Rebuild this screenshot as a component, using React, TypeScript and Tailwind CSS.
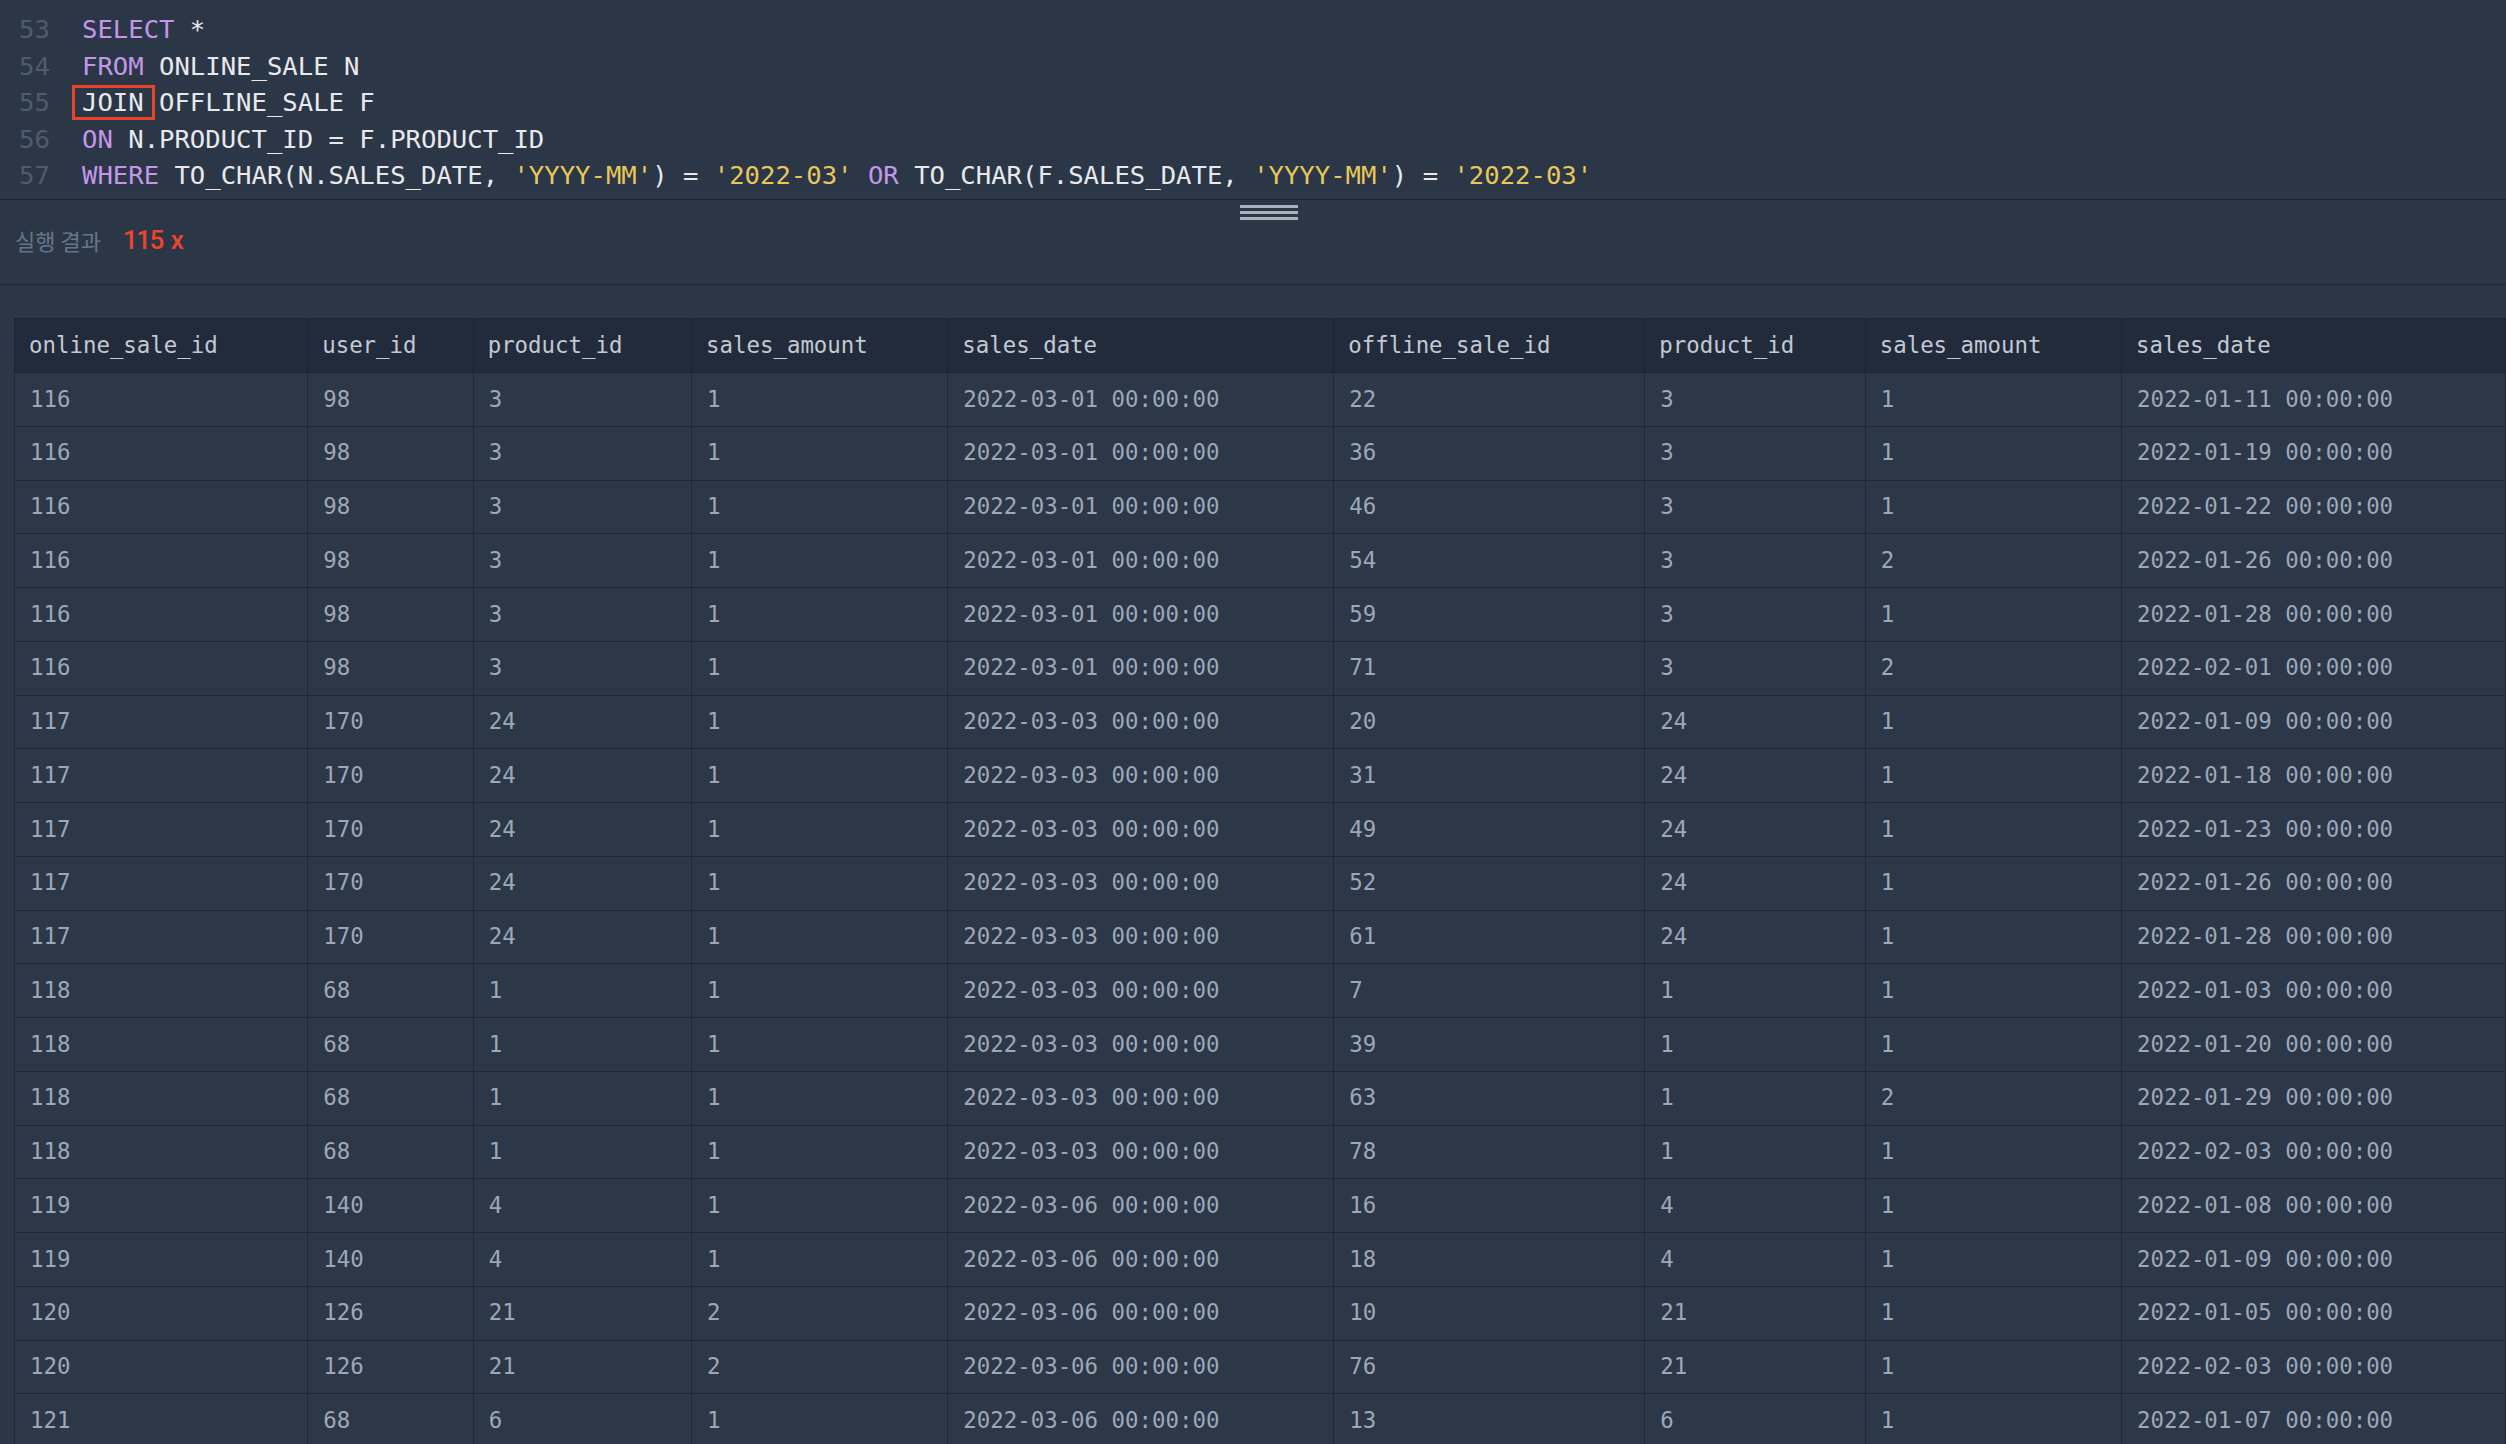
import React from "react";

const MONO = "font-['DejaVu_Sans_Mono','Liberation_Mono',monospace]";

type Tok = { t: string; c?: "kw" | "str" | "box" };

const CODE: { n: number; toks: Tok[] }[] = [
  { n: 53, toks: [{ t: "SELECT", c: "kw" }, { t: " *" }] },
  { n: 54, toks: [{ t: "FROM", c: "kw" }, { t: " ONLINE_SALE N" }] },
  { n: 55, toks: [{ t: "JOIN", c: "box" }, { t: " OFFLINE_SALE F" }] },
  { n: 56, toks: [{ t: "ON", c: "kw" }, { t: " N.PRODUCT_ID = F.PRODUCT_ID" }] },
  {
    n: 57,
    toks: [
      { t: "WHERE", c: "kw" },
      { t: " TO_CHAR(N.SALES_DATE, " },
      { t: "'YYYY-MM'", c: "str" },
      { t: ") = " },
      { t: "'2022-03'", c: "str" },
      { t: " " },
      { t: "OR", c: "kw" },
      { t: " TO_CHAR(F.SALES_DATE, " },
      { t: "'YYYY-MM'", c: "str" },
      { t: ") = " },
      { t: "'2022-03'", c: "str" },
    ],
  },
];

const COLUMNS = [
  { name: "online_sale_id", w: "w-[294px]" },
  { name: "user_id", w: "w-[166px]" },
  { name: "product_id", w: "w-[219px]" },
  { name: "sales_amount", w: "w-[257px]" },
  { name: "sales_date", w: "w-[387px]" },
  { name: "offline_sale_id", w: "w-[312px]" },
  { name: "product_id", w: "w-[221px]" },
  { name: "sales_amount", w: "w-[257px]" },
  { name: "sales_date", w: "w-[385px]" },
];

// online id, user, product, amount, online date, offline id, amount, offline date
const RAW: [number, number, number, number, string, number, number, string][] = [
  [116, 98, 3, 1, "03-01", 22, 1, "01-11"],
  [116, 98, 3, 1, "03-01", 36, 1, "01-19"],
  [116, 98, 3, 1, "03-01", 46, 1, "01-22"],
  [116, 98, 3, 1, "03-01", 54, 2, "01-26"],
  [116, 98, 3, 1, "03-01", 59, 1, "01-28"],
  [116, 98, 3, 1, "03-01", 71, 2, "02-01"],
  [117, 170, 24, 1, "03-03", 20, 1, "01-09"],
  [117, 170, 24, 1, "03-03", 31, 1, "01-18"],
  [117, 170, 24, 1, "03-03", 49, 1, "01-23"],
  [117, 170, 24, 1, "03-03", 52, 1, "01-26"],
  [117, 170, 24, 1, "03-03", 61, 1, "01-28"],
  [118, 68, 1, 1, "03-03", 7, 1, "01-03"],
  [118, 68, 1, 1, "03-03", 39, 1, "01-20"],
  [118, 68, 1, 1, "03-03", 63, 2, "01-29"],
  [118, 68, 1, 1, "03-03", 78, 1, "02-03"],
  [119, 140, 4, 1, "03-06", 16, 1, "01-08"],
  [119, 140, 4, 1, "03-06", 18, 1, "01-09"],
  [120, 126, 21, 2, "03-06", 10, 1, "01-05"],
  [120, 126, 21, 2, "03-06", 76, 1, "02-03"],
  [121, 68, 6, 1, "03-06", 13, 1, "01-07"],
];

const ROWS = RAW.map(([id, user, product, amount, date, offId, offAmount, offDate]) => [
  String(id),
  String(user),
  String(product),
  String(amount),
  `2022-${date} 00:00:00`,
  String(offId),
  String(product),
  String(offAmount),
  `2022-${offDate} 00:00:00`,
]);

function CodeToken({ tok }: { tok: Tok }) {
  if (tok.c === "kw") {
    return <span className="text-[#c397e8]">{tok.t}</span>;
  }
  if (tok.c === "str") {
    return <span className="text-[#e9c75b]">{tok.t}</span>;
  }
  if (tok.c === "box") {
    return (
      <span className="relative">
        {tok.t}
        <span className="absolute -left-[10px] -right-[11px] top-[-2px] bottom-[-3px] border-[3px] border-[#e9442b]" />
      </span>
    );
  }
  return <span>{tok.t}</span>;
}

export default function App() {
  return (
    <div className="h-[1444px] w-full overflow-hidden bg-[#2b3647]">
      <div className="h-[200px] border-b border-[#1c2432] pt-[11px]">
        {CODE.map((line) => (
          <div
            key={line.n}
            className={`flex h-[36.5px] items-center whitespace-pre text-[25.6px] ${MONO}`}
          >
            <span className="w-[82px] shrink-0 pl-[19px] text-[#4f5c6e]">{line.n}</span>
            <span className="text-[#e8e9ec]">
              {line.toks.map((tok, i) => (
                <CodeToken key={i} tok={tok} />
              ))}
            </span>
          </div>
        ))}
      </div>

      <div className="h-[85px] border-b border-[#1c2432] pt-[5px]">
        <div className="flex justify-center pl-[32px]">
          <div className="flex flex-col gap-[3px]">
            <div className="h-[3px] w-[58px] bg-[#a8b2bc]" />
            <div className="h-[3px] w-[58px] bg-[#a8b2bc]" />
            <div className="h-[3px] w-[58px] bg-[#a8b2bc]" />
          </div>
        </div>
        <div className="flex h-[40px] items-center gap-[22px] pl-[15px]">
          <span className="font-['Noto_Sans_CJK_KR',sans-serif] text-[22px] text-[#66768a]">
            실행 결과
          </span>
          <span className="flex gap-[8px] font-['Roboto',sans-serif] text-[26px] font-medium tracking-[-1.5px] text-[#f0432a]">
            <span>115</span>
            <span>x</span>
          </span>
        </div>
      </div>

      <div className="pl-[14px] pt-[33px]">
        <table className={`table-fixed border-collapse text-[22.4px] ${MONO}`}>
          <thead>
            <tr className="bg-[#222b3b]">
              {COLUMNS.map((col, i) => (
                <th
                  key={i}
                  className={`${col.w} h-[54px] border border-[#1c2432] pl-[14px] text-left font-normal text-[#c2c9d2]`}
                >
                  {col.name}
                </th>
              ))}
            </tr>
          </thead>
          <tbody>
            {ROWS.map((row, r) => (
              <tr key={r} className="bg-[#2c3748]">
                {row.map((cell, c) => (
                  <td
                    key={c}
                    className="h-[53.75px] border border-[#1f2836] pl-[15px] whitespace-nowrap text-[#9ca8b7]"
                  >
                    {cell}
                  </td>
                ))}
              </tr>
            ))}
          </tbody>
        </table>
      </div>
    </div>
  );
}
